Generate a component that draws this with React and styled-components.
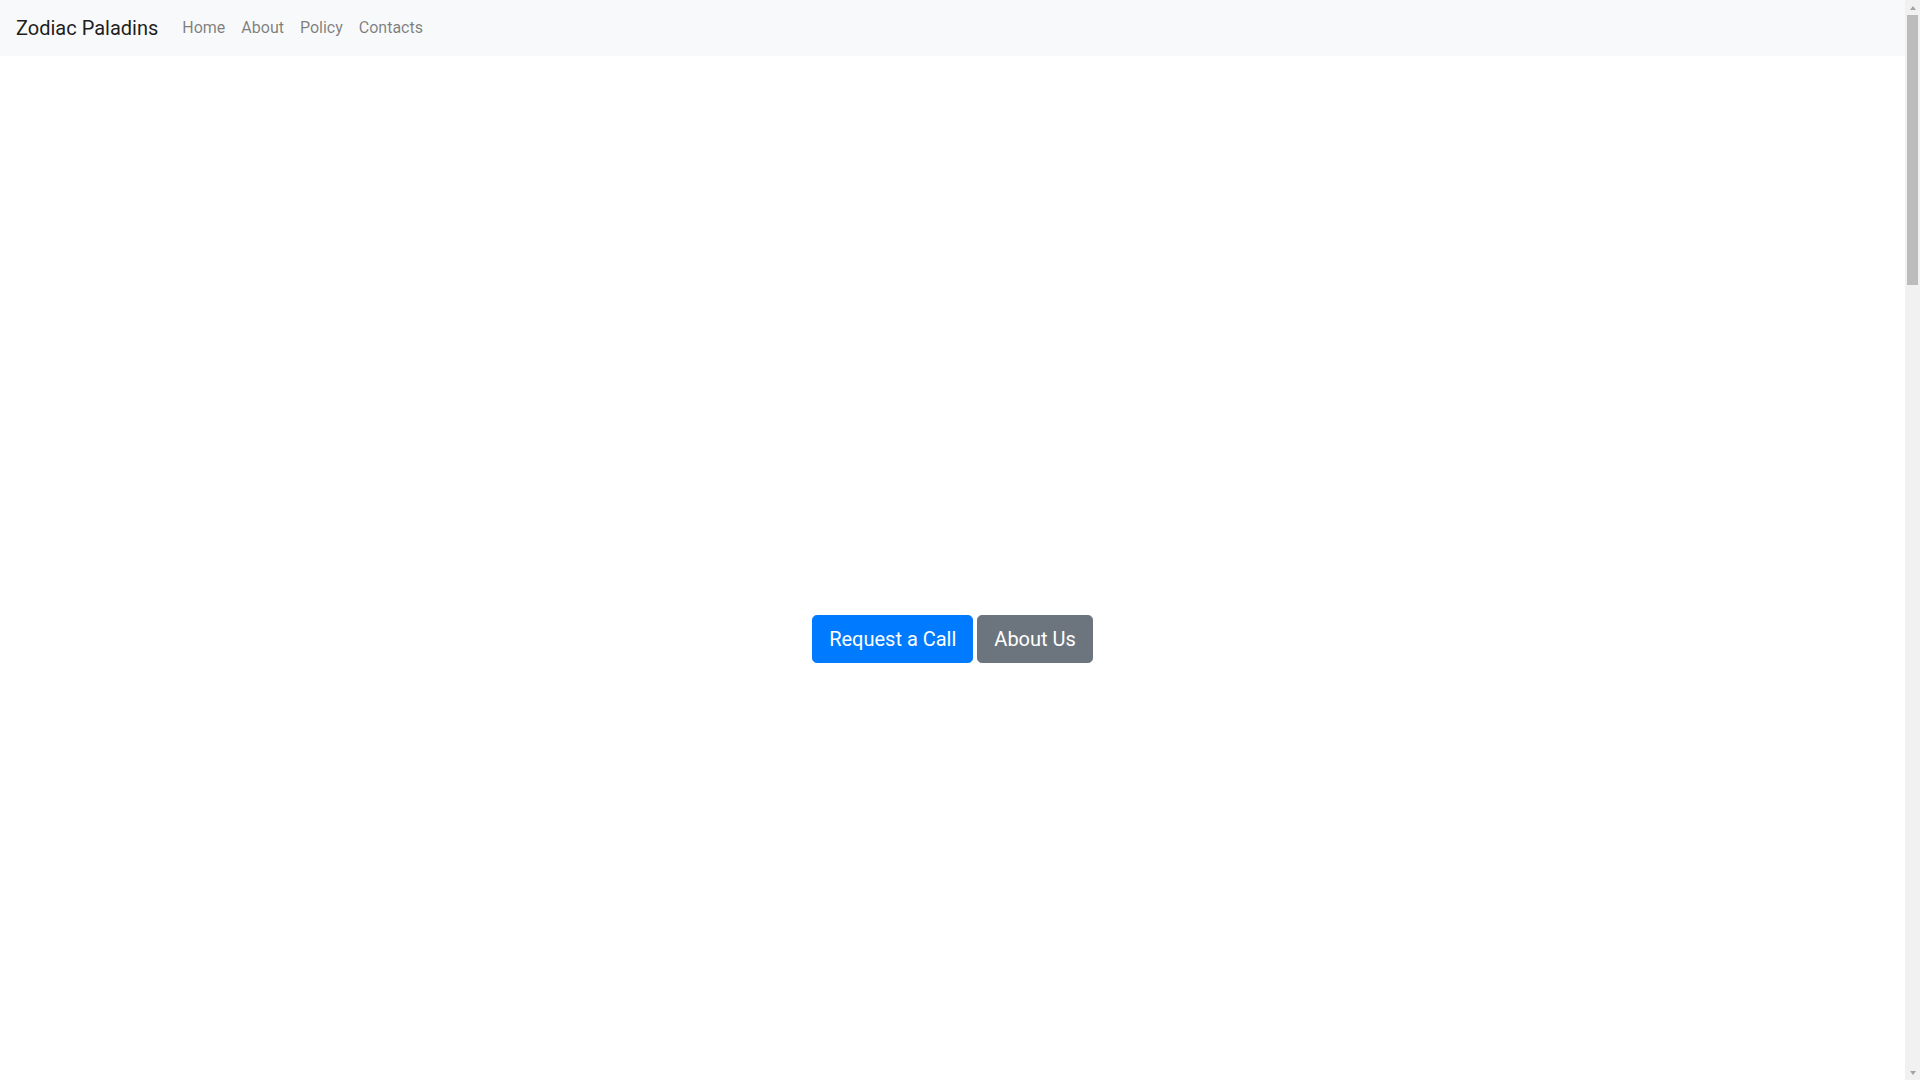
import React from "react";
import styled, { createGlobalStyle } from "styled-components";

const Global = createGlobalStyle`
  *, *::before, *::after { box-sizing: border-box; }
  html, body { margin: 0; padding: 0; }
  body {
    font-family: Roboto, "Helvetica Neue", Arial, "Noto Sans", sans-serif;
    font-size: 16px;
    line-height: 1.5;
    color: #212529;
    background: #fff;
  }
`;

const Page = styled.div`
  width: calc(100vw - 15px);
`;

const Navbar = styled.nav`
  display: flex;
  align-items: center;
  padding: 8px 16px;
  background: #f8f9fa;
  height: 56px;
`;

const Brand = styled.a`
  font-size: 20px;
  line-height: 30px;
  padding: 5px 0;
  margin-right: 16px;
  color: rgba(0, 0, 0, 0.9);
  text-decoration: none;
  white-space: nowrap;
`;

const NavList = styled.ul`
  display: flex;
  list-style: none;
  margin: 0;
  padding: 0;
`;

const NavLink = styled.a`
  display: block;
  padding: 8px;
  color: rgba(0, 0, 0, 0.5);
  text-decoration: none;
`;

const Hero = styled.main`
  padding-top: 559px;
  min-height: 4144px;
  text-align: center;
`;

const Actions = styled.div`
  display: flex;
  justify-content: center;
  gap: 4px;
`;

const Button = styled.a`
  display: inline-block;
  font-size: 20px;
  line-height: 1.5;
  padding: 8px 16px;
  border: 1px solid ${(p) => p.$bg};
  border-radius: 4.8px;
  background: ${(p) => p.$bg};
  color: #fff;
  text-decoration: none;
`;

/* Classic scrollbar drawn over the right edge of the viewport */
const ScrollRail = styled.div`
  position: fixed;
  top: 0;
  right: 0;
  width: 15px;
  height: 100vh;
  background: #f1f1f1;
  display: flex;
  flex-direction: column;
  align-items: center;
`;

const Arrow = styled.div`
  flex: 0 0 15px;
  width: 15px;
  display: flex;
  align-items: center;
  justify-content: center;
  &::before {
    content: "";
    width: 0;
    height: 0;
    border-left: 3.5px solid transparent;
    border-right: 3.5px solid transparent;
    ${(p) =>
      p.$down
        ? "border-top: 4px solid #a3a3a3;"
        : "border-bottom: 4px solid #a3a3a3;"}
  }
`;

const Track = styled.div`
  flex: 1;
  width: 100%;
  padding: 0 2px;
`;

const Thumb = styled.div`
  width: 100%;
  height: 270px;
  background: #bcbcbc;
`;

export default function App() {
  return (
    <>
      <Global />
      <Page>
        <Navbar>
          <Brand href="#">Zodiac Paladins</Brand>
          <NavList>
            {["Home", "About", "Policy", "Contacts"].map((l) => (
              <li key={l}>
                <NavLink href="#">{l}</NavLink>
              </li>
            ))}
          </NavList>
        </Navbar>
        <Hero>
          <Actions>
            <Button href="#" $bg="#007bff">Request a Call</Button>
            <Button href="#" $bg="#6c757d">About Us</Button>
          </Actions>
        </Hero>
      </Page>
      <ScrollRail aria-hidden="true">
        <Arrow />
        <Track>
          <Thumb />
        </Track>
        <Arrow $down />
      </ScrollRail>
    </>
  );
}
